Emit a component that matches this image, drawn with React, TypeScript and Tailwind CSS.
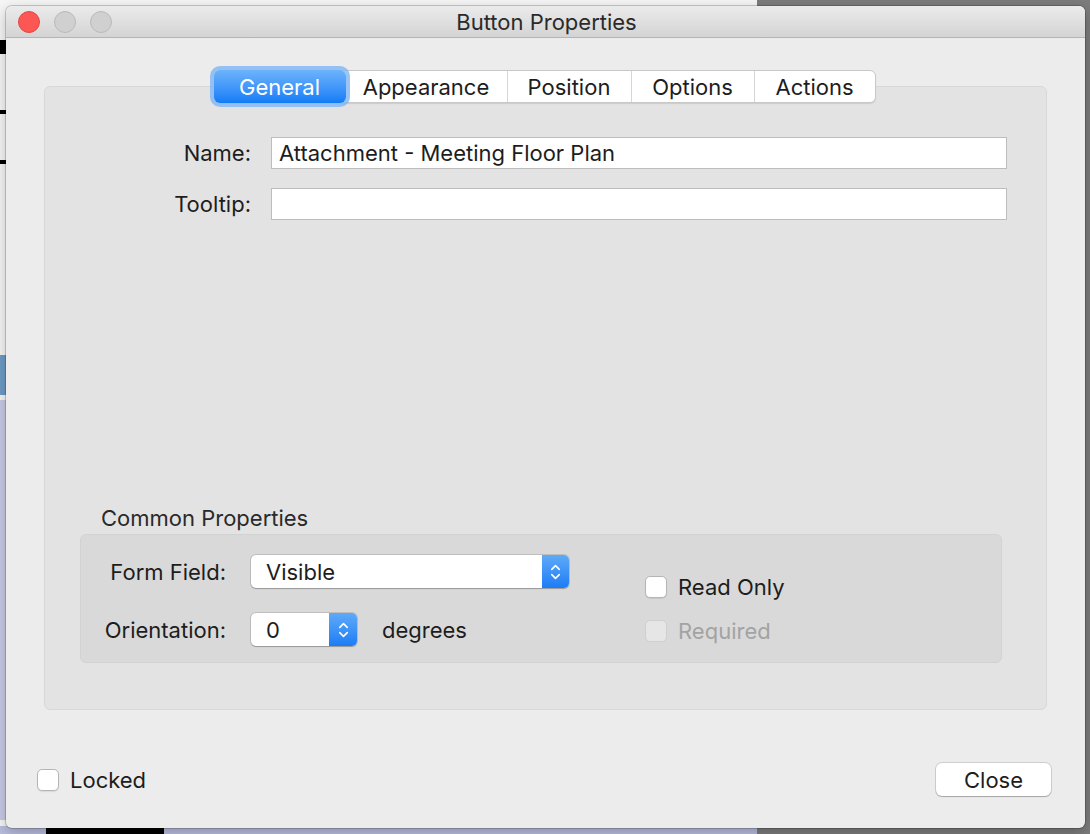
import { ChevronDown, ChevronUp } from 'lucide-react';

const TABS = ['General', 'Appearance', 'Position', 'Options', 'Actions'];
const TAB_WIDTHS = ['w-[132px]', 'w-[161px]', 'w-[124px]', 'w-[123px]', 'w-[121px]'];

function Stepper({ w }: { w: string }) {
  return (
    <div className={`${w} h-full flex flex-col items-center justify-center rounded-r-[5px] bg-gradient-to-b from-[#5eaaf8] to-[#1a7cf5]`}>
      <ChevronUp size={15} strokeWidth={2.5} className="text-white -mb-[3px]" />
      <ChevronDown size={15} strokeWidth={2.5} className="text-white -mt-[3px]" />
    </div>
  );
}

function Checkbox({ disabled }: { disabled?: boolean }) {
  return (
    <div
      className={`w-[22px] h-[22px] shrink-0 rounded-[5px] border ${
        disabled ? 'bg-[#e6e6e6] border-[#cfcfcf]' : 'bg-white border-[#b5b5b5] shadow-[0_1px_1px_rgba(0,0,0,0.08)]'
      }`}
    />
  );
}

export default function App() {
  return (
    <div className="relative w-[1090px] h-[834px] overflow-hidden font-['Inter','Liberation_Sans',Arial,sans-serif] text-[22px] leading-[28px] text-[#1d1d1d]">
      {/* Desktop behind */}
      <div className="absolute inset-0 flex">
        <div className="w-[757px] h-full bg-white flex flex-col">
          <div className="flex-1 bg-[#f6f6f6]" />
          <div className="h-[8px] bg-[#b9bddd]" />
        </div>
        <div className="flex-1 h-full bg-[#7c7c7c]" />
      </div>
      <div className="absolute left-0 top-[40px] w-[6px] h-[14px] bg-black" />
      <div className="absolute left-0 top-[110px] w-[6px] h-[4px] bg-black" />
      <div className="absolute left-0 top-[160px] w-[6px] h-[4px] bg-black" />
      <div className="absolute left-0 top-[355px] w-[6px] h-[40px] bg-[#6e9bc6]" />
      <div className="absolute left-0 top-[400px] w-[6px] h-[420px] bg-[#c9cbe6]" />
      <div className="absolute left-[46px] top-[826px] w-[118px] h-[8px] bg-black" />

      {/* Window */}
      <div className="absolute left-[6px] top-[6px] w-[1079px] h-[822px] rounded-[6px] bg-[#ececec] shadow-[0_0_0_1px_rgba(0,0,0,0.18),0_4px_14px_rgba(0,0,0,0.25)] flex flex-col overflow-hidden">
        {/* Title bar */}
        <div className="relative h-[32px] shrink-0 bg-gradient-to-b from-[#ebebeb] to-[#d4d4d4] border-b border-[#b4b4b4] flex items-center justify-center">
          <div className="absolute left-[12px] top-[5px] flex gap-[14px]">
            <div className="w-[22px] h-[22px] rounded-full bg-[#fc5753] border border-[#df4744]" />
            <div className="w-[22px] h-[22px] rounded-full bg-[#d0d0d0] border border-[#b9b9b9]" />
            <div className="w-[22px] h-[22px] rounded-full bg-[#d0d0d0] border border-[#b9b9b9]" />
          </div>
          <span className="text-[22px] text-[#2a2a2a] translate-x-[1px]">Button Properties</span>
        </div>

        {/* Body */}
        <div className="flex-1 flex flex-col px-[38px] pt-[48px]">
          <div className="relative">
            {/* Tabs */}
            <div className="absolute left-0 right-0 -top-[16px] flex justify-center z-10">
              <div className="flex h-[33px] bg-white rounded-[6px] border border-[#c8c8c8] shadow-[0_1px_1px_rgba(0,0,0,0.1)] translate-x-[-1px]">
                {TABS.map((t, i) =>
                  i === 0 ? (
                    <div
                      key={t}
                      className={`${TAB_WIDTHS[i]} -my-px -ml-px flex items-center justify-center rounded-[6px] bg-gradient-to-b from-[#6cb3fa] to-[#0d7cf7] text-white ring-4 ring-[#7fb5f5]/80`}
                    >
                      {t}
                    </div>
                  ) : (
                    <div
                      key={t}
                      className={`${TAB_WIDTHS[i]} flex items-center justify-center ${i > 1 ? 'border-l border-[#d6d6d6]' : ''}`}
                    >
                      {t}
                    </div>
                  )
                )}
              </div>
            </div>

            {/* Tab panel */}
            <div className="h-[624px] rounded-[6px] bg-[#e3e3e3] border border-[#d8d8d8] flex flex-col pt-[50px] px-[35px]">
              <div className="grid grid-cols-[171px_1fr] gap-x-[20px] gap-y-[19px] items-center pr-[4px]">
                <div className="text-right">Name:</div>
                <div className="h-[32px] bg-white border border-[#bdbdbd] flex items-center px-[7px]">
                  Attachment - Meeting Floor Plan
                </div>
                <div className="text-right">Tooltip:</div>
                <div className="h-[32px] bg-white border border-[#bdbdbd]" />
              </div>

              <div className="flex-1" />

              {/* Common properties */}
              <div className="pl-[21px] pb-[2px] text-[#2a2a2a]">Common Properties</div>
              <div className="mb-[46px] mr-[9px] h-[129px] rounded-[6px] bg-[#d9d9d9] border border-[#d2d2d2] flex px-[22px] pt-[20px]">
                <div className="grid grid-cols-[148px_auto] items-center gap-y-[25px] w-[540px] auto-rows-[33px]">
                  <div className="text-right pr-[25px]">Form Field:</div>
                  <div className="w-[318px] h-[33px] bg-white rounded-[5px] shadow-[0_0_0_1px_rgba(0,0,0,0.12),0_1px_1px_rgba(0,0,0,0.2)] flex items-center">
                    <span className="flex-1 pl-[15px]">Visible</span>
                    <Stepper w="w-[27px]" />
                  </div>
                  <div className="text-right pr-[25px]">Orientation:</div>
                  <div className="flex items-center">
                    <div className="w-[106px] h-[33px] bg-white rounded-[5px] shadow-[0_0_0_1px_rgba(0,0,0,0.12),0_1px_1px_rgba(0,0,0,0.2)] flex items-center">
                      <span className="flex-1 pl-[15px]">0</span>
                      <Stepper w="w-[28px]" />
                    </div>
                    <span className="ml-[25px]">degrees</span>
                  </div>
                </div>
                <div className="ml-[2px] pt-[18px] flex flex-col gap-[16px]">
                  <div className="flex items-center gap-[11px]">
                    <Checkbox />
                    <span>Read Only</span>
                  </div>
                  <div className="flex items-center gap-[11px]">
                    <Checkbox disabled />
                    <span className="text-[#a3a3a3]">Required</span>
                  </div>
                </div>
              </div>
            </div>
          </div>

          {/* Footer */}
          <div className="flex items-start justify-between -mx-[7px] mt-[53px]">
            <div className="flex items-center gap-[11px] mt-[3px]">
              <Checkbox />
              <span>Locked</span>
            </div>
            <div className="w-[115px] h-[33px] mr-[3px] rounded-[6px] bg-white shadow-[0_0_0_1px_rgba(0,0,0,0.12),0_1px_1px_rgba(0,0,0,0.2)] flex items-center justify-center">
              Close
            </div>
          </div>
        </div>
      </div>
    </div>
  );
}
